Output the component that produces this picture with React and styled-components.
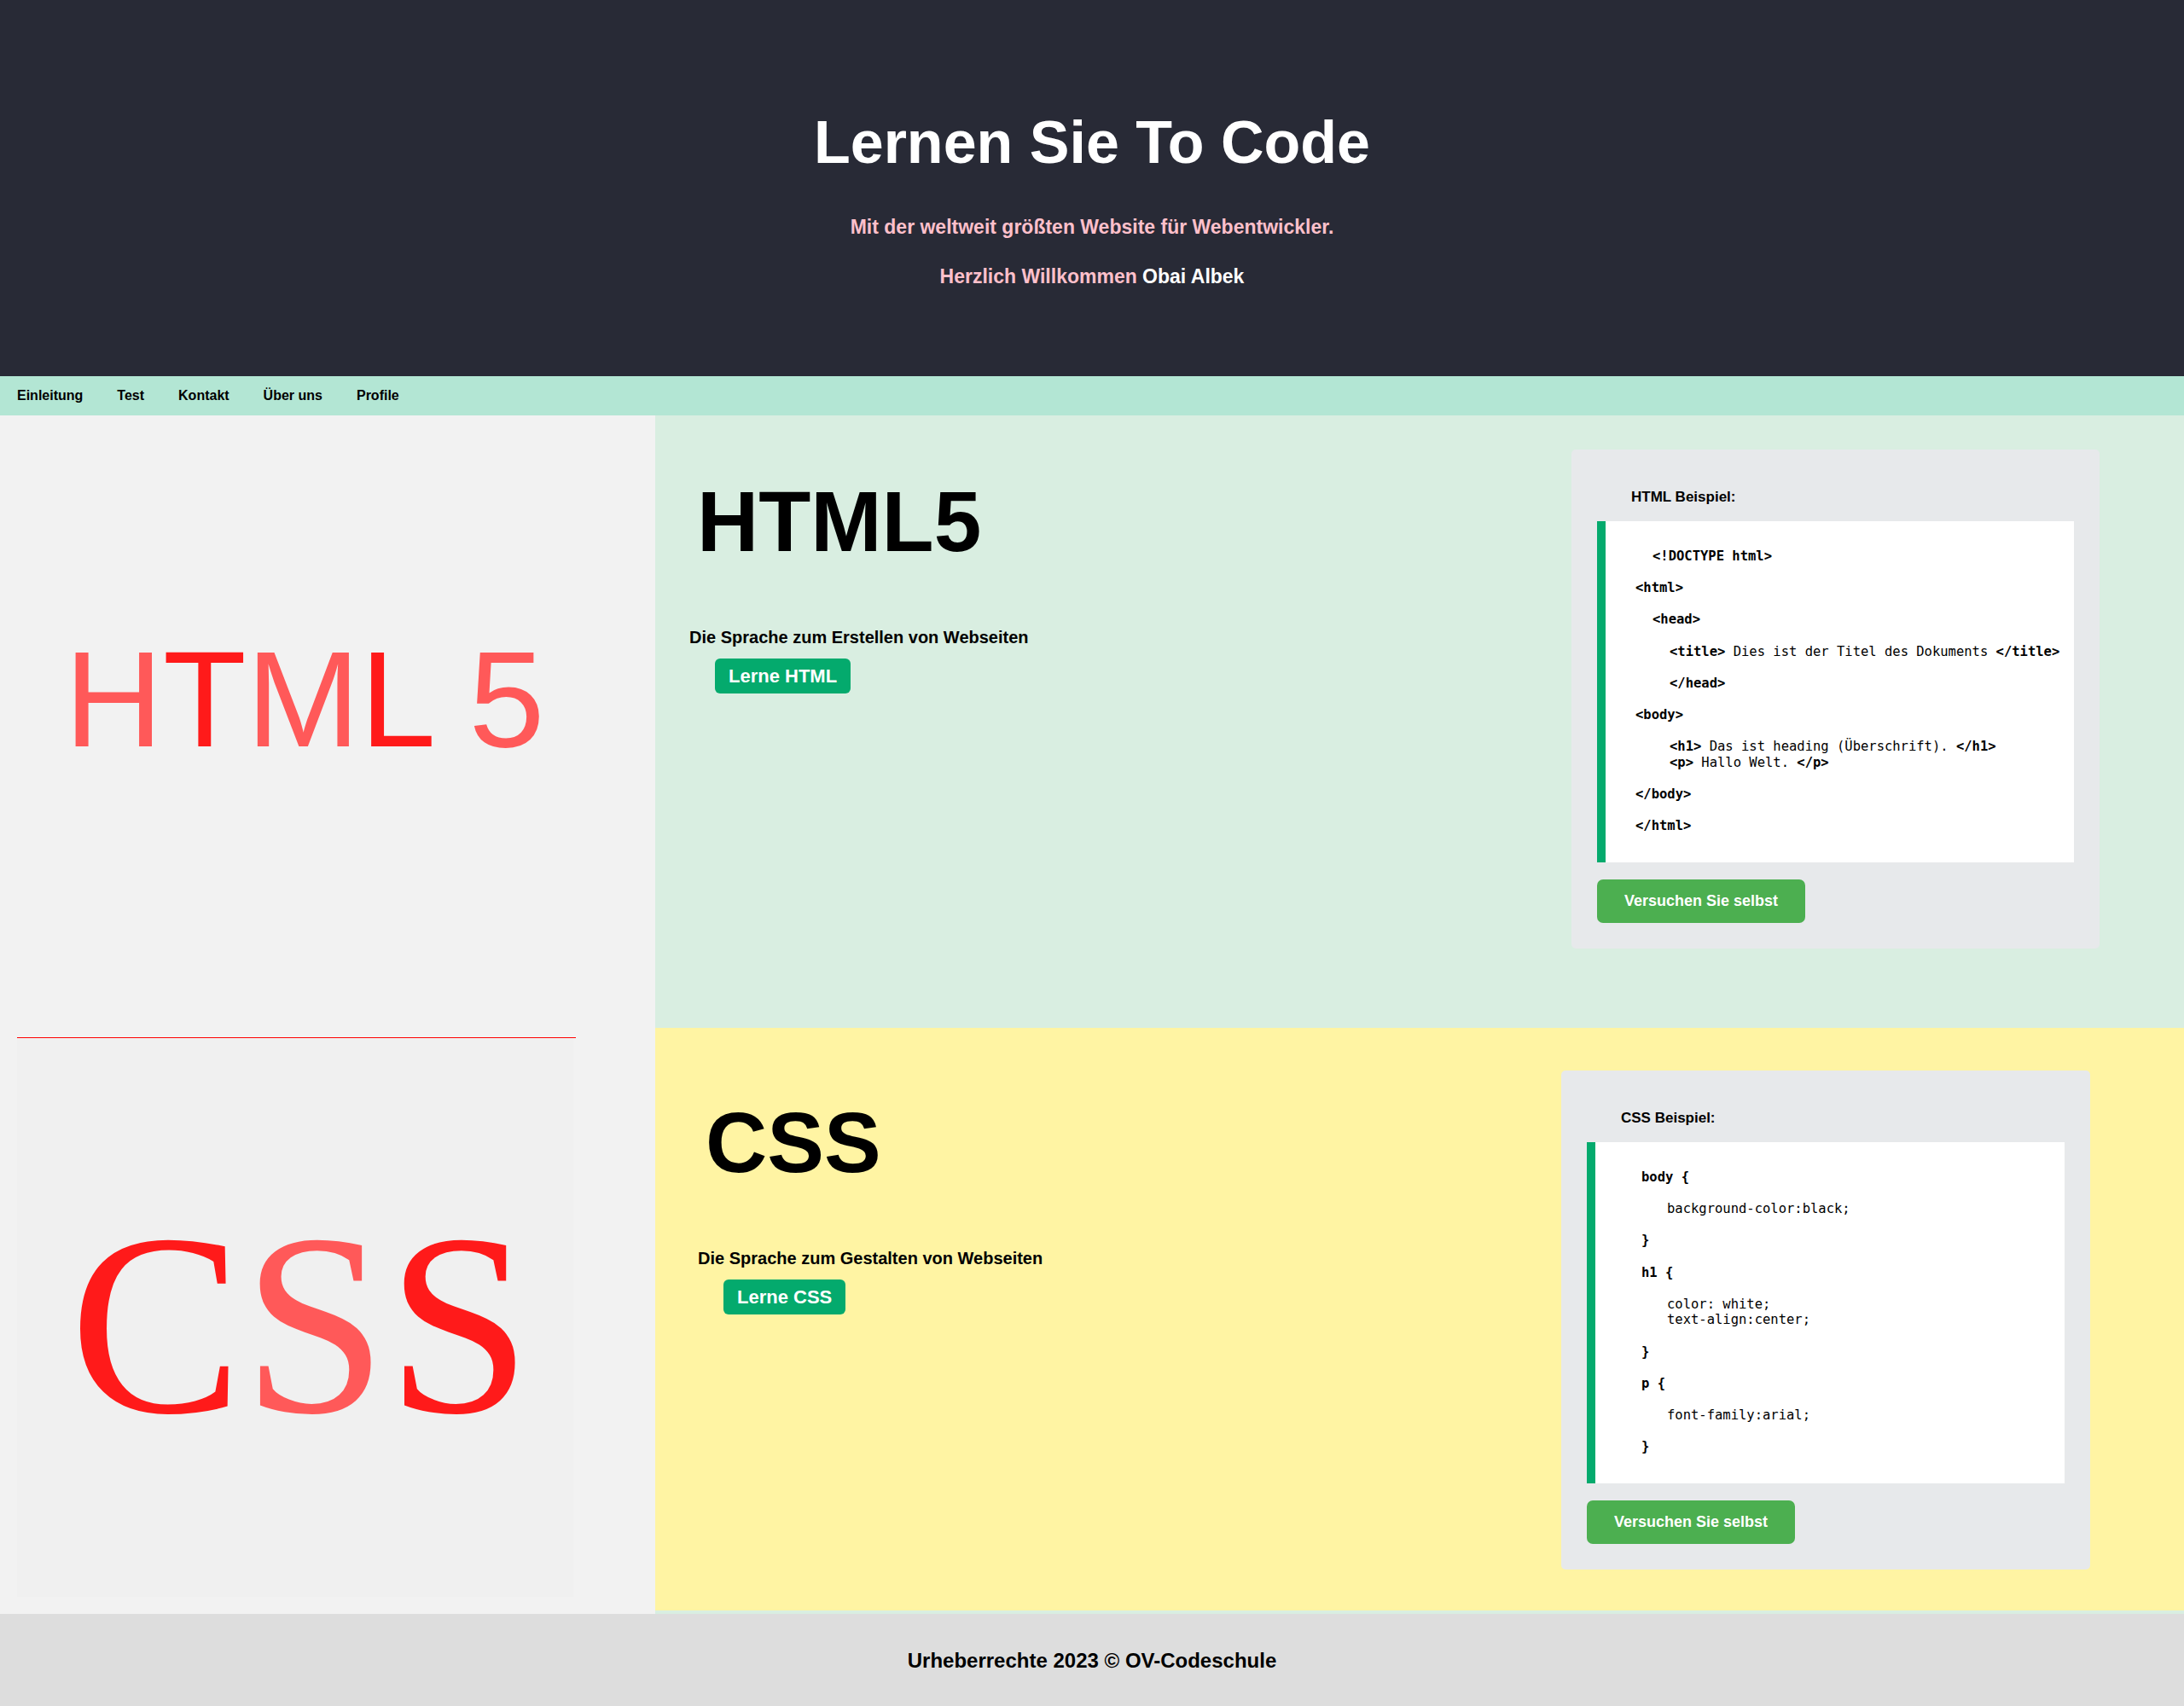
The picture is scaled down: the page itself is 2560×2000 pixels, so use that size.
import React from 'react';
import styled, { createGlobalStyle } from 'styled-components';

const GlobalStyle = createGlobalStyle`
  body {
    margin: 0;
    font-family: "Liberation Sans", Arial, sans-serif;
    color: #000;
  }
`;

const Header = styled.header`
  background-color: #282a36;
  padding: 128px 0 104px;
  text-align: center;
`;

const Title = styled.h1`
  margin: 0 0 47px;
  color: #fff;
  font-size: 70px;
  line-height: 78px;
  font-weight: 700;
`;

const Tagline = styled.p`
  margin: 0 0 ${props => props.gap || 0}px;
  color: pink;
  font-size: 23px;
  line-height: 26px;
  font-weight: 700;
`;

const Name = styled.span`
  color: #fff;
`;

const Nav = styled.nav`
  display: flex;
  align-items: center;
  gap: 40px;
  height: 46px;
  padding-left: 20px;
  background-color: #b3e6d4;
`;

const NavLink = styled.a`
  color: #000;
  text-decoration: none;
  font-size: 16px;
  font-weight: 700;
`;

const Main = styled.main`
  display: flex;
`;

const LeftCol = styled.aside`
  width: 768px;
  flex-shrink: 0;
  box-sizing: border-box;
  padding: 0 0 20px 20px;
  background-color: #f2f2f2;
`;

const LogoBox = styled.div`
  width: 652px;
  box-sizing: border-box;
  height: ${props => props.h}px;
  padding: ${props => props.top}px 0 0 ${props => props.left}px;
  background-color: ${props => props.bg || 'transparent'};
  text-align: center;
  white-space: pre;
  font-family: ${props => (props.serif ? '"Liberation Serif", "Times New Roman", serif' : '"Liberation Sans", Arial, sans-serif')};
  font-size: ${props => props.size}px;
  line-height: ${props => props.lh}px;
`;

const Letter = styled.span`
  color: ${props => (props.light ? '#ff5959' : '#ff1a1a')};
`;

const RedLine = styled.div`
  width: 655px;
  height: 1px;
  background-color: #ff0000;
`;

const RightCol = styled.div`
  flex: 1;
  display: flex;
  flex-direction: column;
  background-color: #d9eee1;
`;

const Section = styled.section`
  display: flex;
  box-sizing: border-box;
  height: ${props => props.h}px;
  padding-top: ${props => props.top}px;
  background-color: ${props => props.bg};
`;

const Intro = styled.div`
  flex: 1;
  padding-left: ${props => props.left}px;
`;

const BigHeading = styled.h2`
  margin: 27px 0 0 9px;
  font-size: 100px;
  line-height: 115px;
  font-weight: 700;
`;

const Lead = styled.p`
  margin: 67px 0 0;
  font-size: 20px;
  line-height: 23px;
  font-weight: 700;
`;

const LearnButton = styled.a`
  display: inline-block;
  margin: 13px 0 0 30px;
  padding: 8px 16px;
  border-radius: 6px;
  background-color: #04aa6d;
  color: #fff;
  font-size: 22px;
  line-height: 25px;
  font-weight: 700;
  text-decoration: none;
`;

const Card = styled.div`
  align-self: flex-start;
  width: ${props => props.w}px;
  margin-right: ${props => props.right}px;
  box-sizing: border-box;
  padding: 30px;
  border-radius: 5px;
  background-color: #e7e9eb;
`;

const CardTitle = styled.h4`
  margin: 16px 0 18px 40px;
  font-size: 17px;
  line-height: 20px;
  font-weight: 700;
`;

const CodeBlock = styled.div`
  height: 400px;
  box-sizing: border-box;
  padding-top: 32px;
  border-left: 10px solid #04aa6d;
  background-color: #fff;
  font-family: "DejaVu Sans Mono", "Liberation Mono", monospace;
  font-size: 15.5px;
  line-height: 18.6px;
  white-space: pre;
`;

const CodeLine = styled.div`
  height: 18.6px;
  padding-left: ${props => props.indent || 0}px;
`;

const Tag = styled.b`
  font-weight: 700;
`;

const TryButton = styled.a`
  display: inline-block;
  margin-top: 20px;
  padding: 15px 32px;
  border-radius: 7px;
  background-color: #4caf50;
  color: #fff;
  font-size: 18px;
  line-height: 21px;
  font-weight: 700;
  text-decoration: none;
`;

const Footer = styled.footer`
  display: flex;
  align-items: center;
  justify-content: center;
  height: 108px;
  background-color: #dddddd;
  font-size: 24px;
  line-height: 27px;
  font-weight: 700;
`;

// each line: [indent, [[text, bold], ...]] ; null = blank line
const htmlCode = [
  [55, [['<!DOCTYPE html>', true]]],
  null,
  [35, [['<html>', true]]],
  null,
  [55, [['<head>', true]]],
  null,
  [75, [['<title>', true], [' Dies ist der Titel des Dokuments ', false], ['</title>', true]]],
  null,
  [75, [['</head>', true]]],
  null,
  [35, [['<body>', true]]],
  null,
  [75, [['<h1>', true], [' Das ist heading (Überschrift). ', false], ['</h1>', true]]],
  [75, [['<p>', true], [' Hallo Welt. ', false], ['</p>', true]]],
  null,
  [35, [['</body>', true]]],
  null,
  [35, [['</html>', true]]],
];

const cssCode = [
  [54, [['body {', true]]],
  null,
  [84, [['background-color:black;', false]]],
  null,
  [54, [['}', true]]],
  null,
  [54, [['h1 {', true]]],
  null,
  [84, [['color: white;', false]]],
  [84, [['text-align:center;', false]]],
  null,
  [54, [['}', true]]],
  null,
  [54, [['p {', true]]],
  null,
  [84, [['font-family:arial;', false]]],
  null,
  [54, [['}', true]]],
];

function Code({ lines }) {
  return (
    <CodeBlock>
      {lines.map((line, i) =>
        line ? (
          <CodeLine key={i} indent={line[0]}>
            {line[1].map(([text, bold], j) => (bold ? <Tag key={j}>{text}</Tag> : <span key={j}>{text}</span>))}
          </CodeLine>
        ) : (
          <CodeLine key={i} />
        )
      )}
    </CodeBlock>
  );
}

const sections = [
  {
    key: 'html',
    bg: '#d9eee1',
    h: 718,
    top: 40,
    left: 40,
    heading: 'HTML5',
    lead: 'Die Sprache zum Erstellen von Webseiten',
    button: 'Lerne HTML',
    cardW: 619,
    cardRight: 99,
    cardTitle: 'HTML Beispiel:',
    code: htmlCode,
  },
  {
    key: 'css',
    bg: '#fff4a3',
    h: 683,
    top: 50,
    left: 50,
    heading: 'CSS',
    lead: 'Die Sprache zum Gestalten von Webseiten',
    button: 'Lerne CSS',
    cardW: 620,
    cardRight: 110,
    cardTitle: 'CSS Beispiel:',
    code: cssCode,
  },
];

export default function App() {
  return (
    <>
      <GlobalStyle />
      <Header>
        <Title>Lernen Sie To Code</Title>
        <Tagline gap={32}>Mit der weltweit größten Website für Webentwickler.</Tagline>
        <Tagline>
          Herzlich Willkommen <Name>Obai Albek</Name>
        </Tagline>
      </Header>
      <Nav>
        <NavLink href="#">Einleitung</NavLink>
        <NavLink href="#">Test</NavLink>
        <NavLink href="#">Kontakt</NavLink>
        <NavLink href="#">Über uns</NavLink>
        <NavLink href="#">Profile</NavLink>
      </Nav>
      <Main>
        <LeftCol>
          <LogoBox h={729} top={241} left={22} size={160} lh={184}>
            <Letter light>H</Letter>
            <Letter>T</Letter>
            <Letter light>M</Letter>
            <Letter>L</Letter> <Letter light>5</Letter>
          </LogoBox>
          <RedLine />
          <LogoBox h={655} top={163} left={12} size={304} lh={346} serif bg="#f0f0f0">
            <Letter>C</Letter>
            <Letter light>S</Letter>
            <Letter>S</Letter>
          </LogoBox>
        </LeftCol>
        <RightCol>
          {sections.map(s => (
            <Section key={s.key} bg={s.bg} h={s.h} top={s.top}>
              <Intro left={s.left}>
                <BigHeading>{s.heading}</BigHeading>
                <Lead>{s.lead}</Lead>
                <LearnButton href="#">{s.button}</LearnButton>
              </Intro>
              <Card w={s.cardW} right={s.cardRight}>
                <CardTitle>{s.cardTitle}</CardTitle>
                <Code lines={s.code} />
                <TryButton href="#">Versuchen Sie selbst</TryButton>
              </Card>
            </Section>
          ))}
        </RightCol>
      </Main>
      <Footer>Urheberrechte 2023 © OV-Codeschule</Footer>
    </>
  );
}
